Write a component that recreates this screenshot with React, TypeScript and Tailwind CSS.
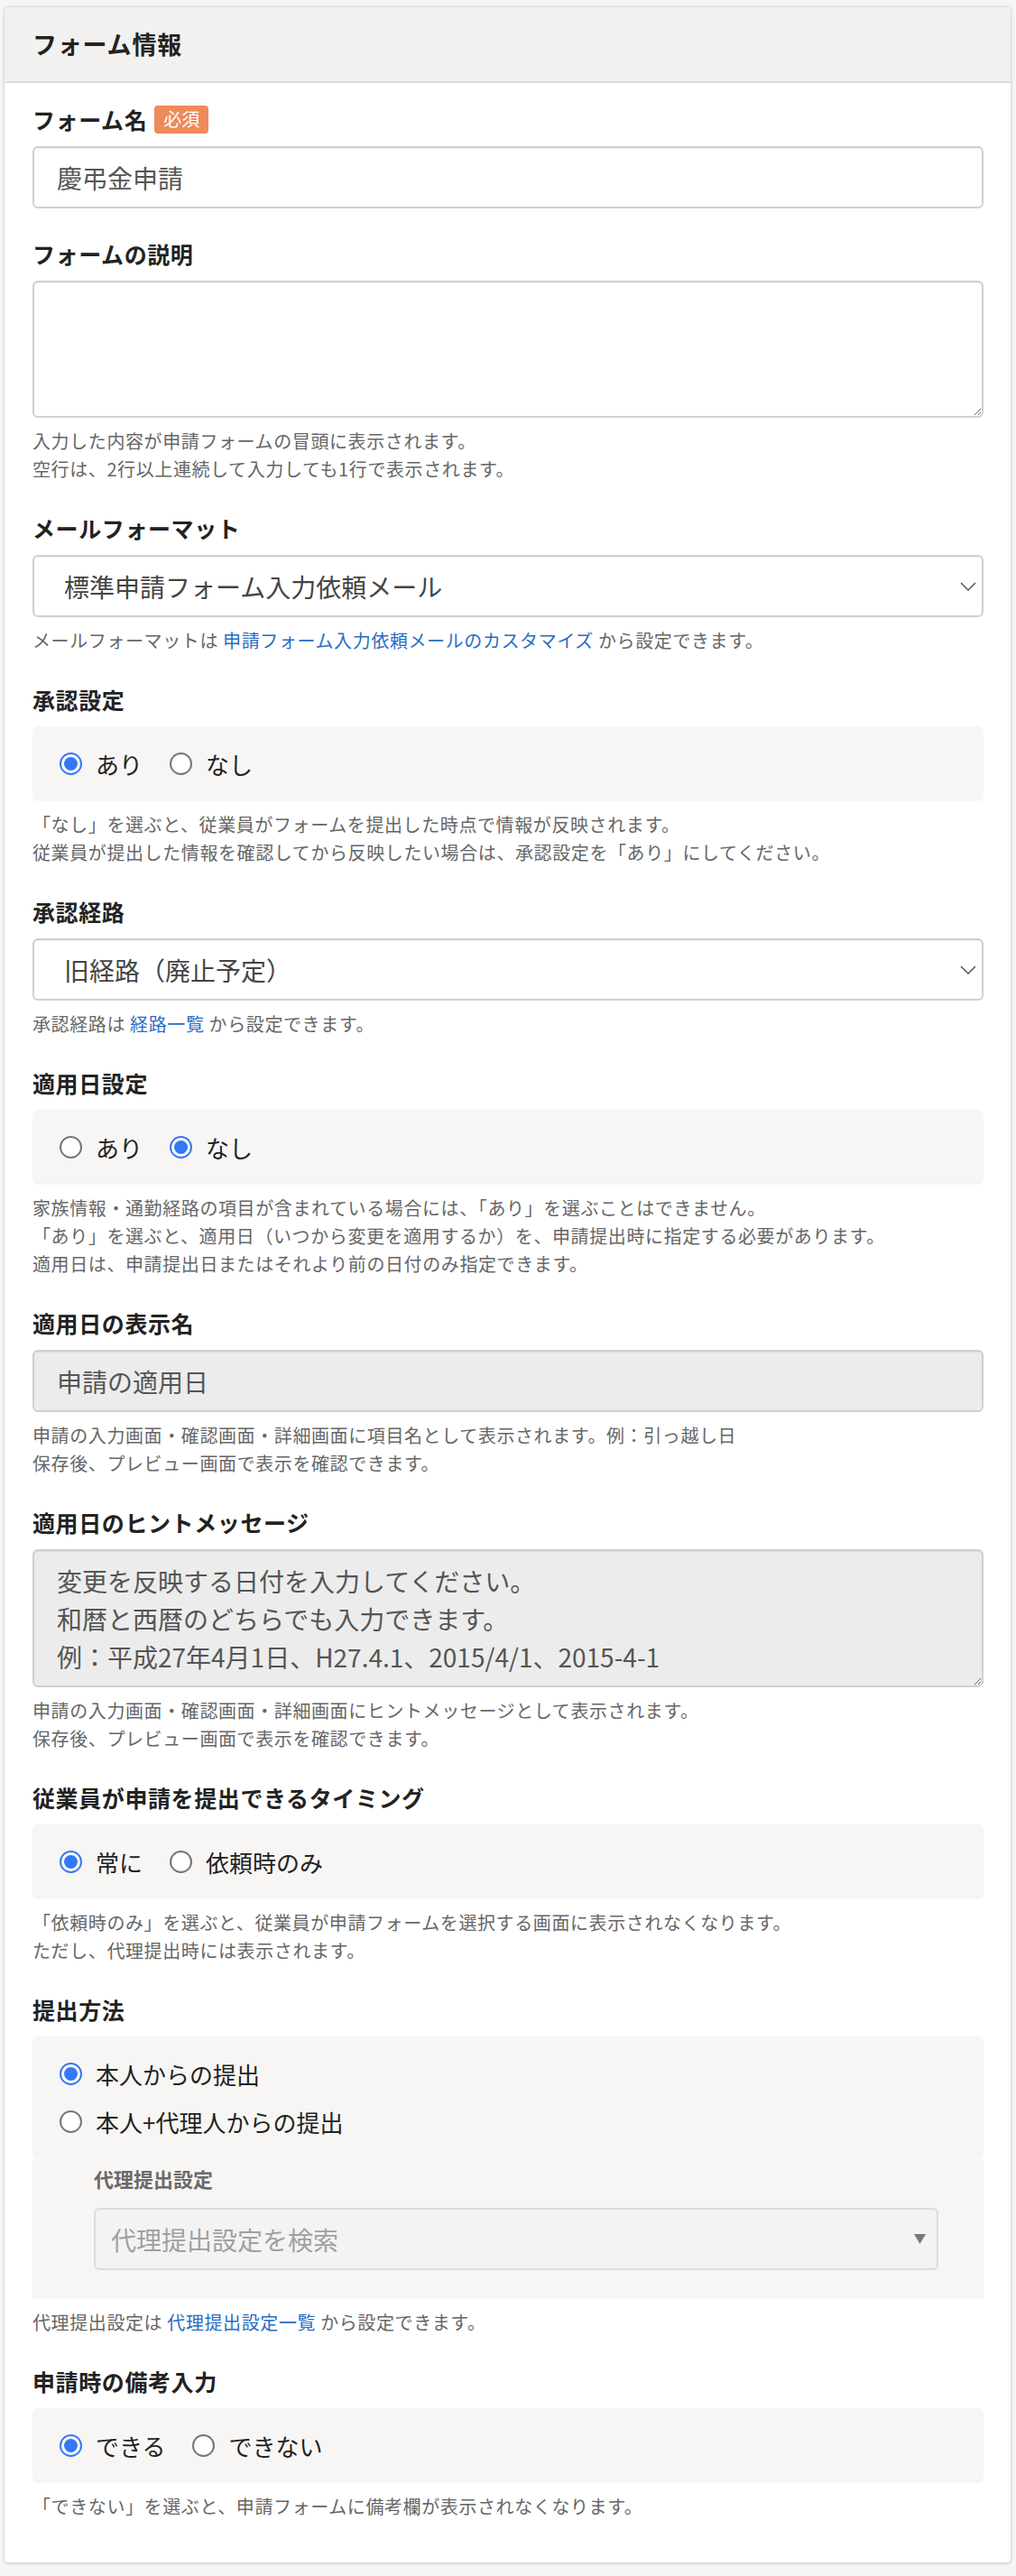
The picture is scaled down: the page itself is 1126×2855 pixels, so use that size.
import type { ReactNode } from "react";

const Label = ({ children, required }: { children: ReactNode; required?: boolean }) => (
  <div className="flex h-[36px] items-center gap-[8px]">
    <span className="text-[25px] font-bold leading-[36px] tracking-[0.6px] text-[#222]">{children}</span>
    {required && (
      <span className="flex h-[31px] items-center rounded-[4px] bg-[#ee8a5b] px-[10px] text-[20px] leading-none text-white">
        必須
      </span>
    )}
  </div>
);

const Help = ({ children }: { children: ReactNode }) => (
  <div className="mt-[10px] text-[20px] leading-[31px] tracking-[0.6px] text-[#666]">{children}</div>
);

const A = ({ children }: { children: ReactNode }) => (
  <a href="#" className="text-[#2b6cc4]">
    {children}
  </a>
);

const Radio = ({ checked, label }: { checked?: boolean; label: string }) => (
  <label className="flex items-center gap-[15px]">
    {checked ? (
      <span className="flex h-[25px] w-[25px] items-center justify-center rounded-full border-2 border-[#3478f6] bg-white">
        <span className="h-[15px] w-[15px] rounded-full bg-[#3478f6]" />
      </span>
    ) : (
      <span className="h-[25px] w-[25px] rounded-full border-2 border-[#767676] bg-white" />
    )}
    <span className="text-[26px] leading-[36px] text-[#222]">{label}</span>
  </label>
);

const RadioBox = ({ children, vertical }: { children: ReactNode; vertical?: boolean }) => (
  <div className="rounded-[6px] bg-[#f7f6f4] px-[30px] py-[15px]">
    <div className={vertical ? "flex flex-col" : "flex gap-[30px]"}>{children}</div>
  </div>
);

const Row = ({ children }: { children: ReactNode }) => (
  <div className="flex h-[53px] items-center">{children}</div>
);

const Chevron = () => (
  <svg width="18" height="10" viewBox="0 0 18 10" fill="none">
    <path d="M1 1l8 8 8-8" stroke="#555" strokeWidth="1.5" />
  </svg>
);

const SelectBox = ({ value }: { value: string }) => (
  <div className="flex h-[69px] items-center justify-between rounded-[6px] border-2 border-[#d0d0d0] bg-white pl-[33px] pr-[6px] shadow-[inset_0_1px_1px_rgba(0,0,0,0.08)]">
    <span className="text-[28px] text-[#444]">{value}</span>
    <Chevron />
  </div>
);

export default function App() {
  return (
    <div className="min-h-[2855px] bg-[#f6f5f3] pb-[11px] pl-[4px] pr-[5px] pt-[7px] font-['Noto_Sans_CJK_JP','Noto_Sans',sans-serif]">
      <div className="overflow-hidden rounded-[5px] border border-[#dcdcdc] bg-white shadow-[0_1px_3px_rgba(0,0,0,0.12)]">
        <div className="flex h-[84px] items-center border-b-2 border-[#dedddb] bg-[#f2f1ef] px-[31px]">
          <h2 className="text-[27px] font-bold tracking-[0.8px] text-[#222]">フォーム情報</h2>
        </div>

        <div className="pb-[47px] pl-[31px] pr-[30px] pt-[22px]">
          {/* フォーム名 */}
          <Label required>フォーム名</Label>
          <div className="mt-[12px] flex h-[69px] items-center rounded-[6px] border-2 border-[#d0d0d0] bg-white px-[25px] shadow-[inset_0_1px_1px_rgba(0,0,0,0.08)]">
            <span className="text-[28px] text-[#555]">慶弔金申請</span>
          </div>

          <div className="mt-[32px]">
            <Label>フォームの説明</Label>
            <textarea
              readOnly
              className="mt-[12px] block h-[152px] w-full rounded-[6px] border-2 border-[#d0d0d0] bg-white px-[25px] py-[12px] text-[28px] leading-[42px] text-[#555] shadow-[inset_0_1px_1px_rgba(0,0,0,0.08)] outline-none"
            />
            <Help>
              <p>入力した内容が申請フォームの冒頭に表示されます。</p>
              <p>空行は、2行以上連続して入力しても1行で表示されます。</p>
            </Help>
          </div>

          <div className="mt-[32px]">
            <Label>メールフォーマット</Label>
            <div className="mt-[12px]">
              <SelectBox value="標準申請フォーム入力依頼メール" />
            </div>
            <Help>
              メールフォーマットは <A>申請フォーム入力依頼メールのカスタマイズ</A> から設定できます。
            </Help>
          </div>

          <div className="mt-[32px]">
            <Label>承認設定</Label>
            <div className="mt-[12px]">
              <RadioBox>
                <Row>
                  <Radio checked label="あり" />
                </Row>
                <Row>
                  <Radio label="なし" />
                </Row>
              </RadioBox>
            </div>
            <Help>
              <p>「なし」を選ぶと、従業員がフォームを提出した時点で情報が反映されます。</p>
              <p>従業員が提出した情報を確認してから反映したい場合は、承認設定を「あり」にしてください。</p>
            </Help>
          </div>

          <div className="mt-[32px]">
            <Label>承認経路</Label>
            <div className="mt-[12px]">
              <SelectBox value="旧経路（廃止予定）" />
            </div>
            <Help>
              承認経路は <A>経路一覧</A> から設定できます。
            </Help>
          </div>

          <div className="mt-[32px]">
            <Label>適用日設定</Label>
            <div className="mt-[12px]">
              <RadioBox>
                <Row>
                  <Radio label="あり" />
                </Row>
                <Row>
                  <Radio checked label="なし" />
                </Row>
              </RadioBox>
            </div>
            <Help>
              <p>家族情報・通勤経路の項目が含まれている場合には、「あり」を選ぶことはできません。</p>
              <p>「あり」を選ぶと、適用日（いつから変更を適用するか）を、申請提出時に指定する必要があります。</p>
              <p>適用日は、申請提出日またはそれより前の日付のみ指定できます。</p>
            </Help>
          </div>

          <div className="mt-[32px]">
            <Label>適用日の表示名</Label>
            <div className="mt-[12px] flex h-[69px] items-center rounded-[6px] border-2 border-[#d0d0d0] bg-[#ececec] px-[25px] shadow-[inset_0_1px_1px_rgba(0,0,0,0.08)]">
              <span className="text-[28px] text-[#555]">申請の適用日</span>
            </div>
            <Help>
              <p>申請の入力画面・確認画面・詳細画面に項目名として表示されます。例：引っ越し日</p>
              <p>保存後、プレビュー画面で表示を確認できます。</p>
            </Help>
          </div>

          <div className="mt-[32px]">
            <Label>適用日のヒントメッセージ</Label>
            <textarea
              readOnly
              defaultValue={
                "変更を反映する日付を入力してください。\n和暦と西暦のどちらでも入力できます。\n例：平成27年4月1日、H27.4.1、2015/4/1、2015-4-1"
              }
              className="mt-[12px] block h-[153px] w-full rounded-[6px] border-2 border-[#d0d0d0] bg-[#ececec] px-[25px] py-[12px] text-[28px] leading-[42px] text-[#555] shadow-[inset_0_1px_1px_rgba(0,0,0,0.08)] outline-none"
            />
            <Help>
              <p>申請の入力画面・確認画面・詳細画面にヒントメッセージとして表示されます。</p>
              <p>保存後、プレビュー画面で表示を確認できます。</p>
            </Help>
          </div>

          <div className="mt-[32px]">
            <Label>従業員が申請を提出できるタイミング</Label>
            <div className="mt-[12px]">
              <RadioBox>
                <Row>
                  <Radio checked label="常に" />
                </Row>
                <Row>
                  <Radio label="依頼時のみ" />
                </Row>
              </RadioBox>
            </div>
            <Help>
              <p>「依頼時のみ」を選ぶと、従業員が申請フォームを選択する画面に表示されなくなります。</p>
              <p>ただし、代理提出時には表示されます。</p>
            </Help>
          </div>

          <div className="mt-[32px]">
            <Label>提出方法</Label>
            <div className="mt-[12px]">
              <RadioBox vertical>
                <Row>
                  <Radio checked label="本人からの提出" />
                </Row>
                <Row>
                  <Radio label="本人+代理人からの提出" />
                </Row>
              </RadioBox>
              <div className="bg-[#f7f6f4] pb-[32px] pl-[68px] pr-[50px] pt-[5px]">
                <div className="text-[22px] font-bold leading-[33px] text-[#6b6a67]">代理提出設定</div>
                <div className="mt-[16px] flex h-[69px] items-center justify-between rounded-[6px] border-2 border-[#dcdcdc] bg-[#f3f3f3] pl-[17px] pr-[12px]">
                  <span className="text-[28px] text-[#a0a0a0]">代理提出設定を検索</span>
                  <svg width="13" height="11" viewBox="0 0 13 11">
                    <path d="M0 0h13L6.5 11z" fill="#777" />
                  </svg>
                </div>
              </div>
            </div>
            <Help>
              代理提出設定は <A>代理提出設定一覧</A> から設定できます。
            </Help>
          </div>

          <div className="mt-[32px]">
            <Label>申請時の備考入力</Label>
            <div className="mt-[12px]">
              <RadioBox>
                <Row>
                  <Radio checked label="できる" />
                </Row>
                <Row>
                  <Radio label="できない" />
                </Row>
              </RadioBox>
            </div>
            <Help>「できない」を選ぶと、申請フォームに備考欄が表示されなくなります。</Help>
          </div>
        </div>
      </div>
    </div>
  );
}
